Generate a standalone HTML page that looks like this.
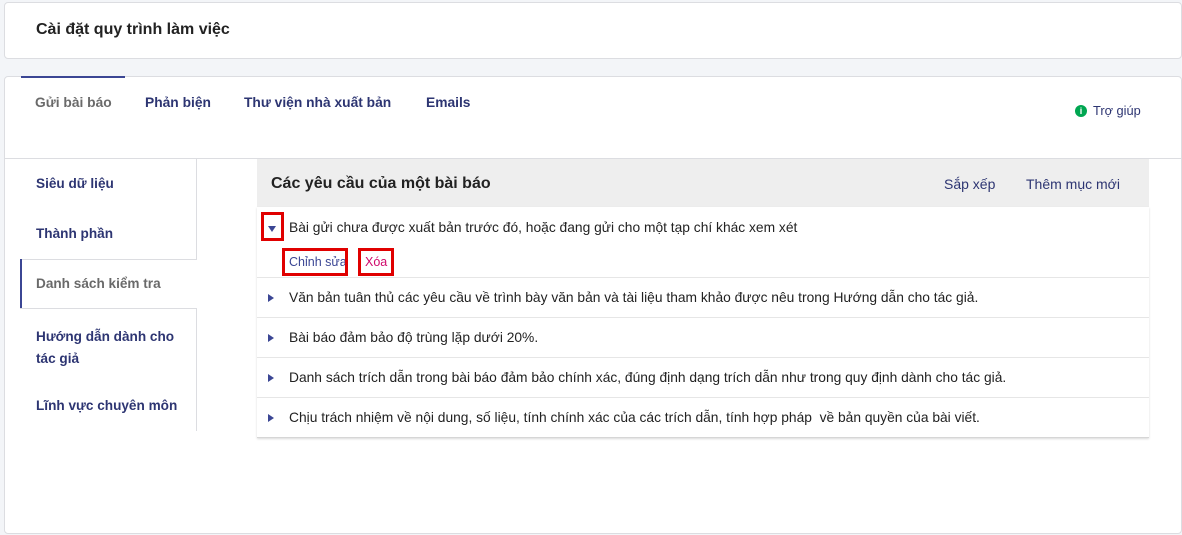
<!DOCTYPE html>
<html><head><meta charset="utf-8"><style>
*{box-sizing:border-box;margin:0;padding:0}
body{width:1182px;height:535px;background:#f3f5f8;font-family:"Liberation Sans","DejaVu Sans",sans-serif;position:relative;overflow:hidden;color:#222}
.a{position:absolute;white-space:nowrap}
.card{position:absolute;background:#fff;border:1px solid #dcdde1;border-radius:4px}
.nav{font-weight:bold;font-size:13.6px;color:#2d3572}
.row{position:absolute;left:257px;width:892px;border-bottom:1px solid #e6e6e6;font-size:13.8px;color:#222}
.tri{position:absolute;width:0;height:0;border-top:4px solid transparent;border-bottom:4px solid transparent;border-left:6px solid #3b4694}
.red{position:absolute;border:3px solid #e00000}
</style></head><body>
<div class="card" style="left:4px;top:2px;width:1178px;height:57px"></div>
<div class="a" style="left:36px;top:21px;font-size:16px;font-weight:bold;color:#222">Cài đặt quy trình làm việc</div>

<div class="card" style="left:4px;top:76px;width:1178px;height:458px"></div>
<div class="a" style="left:21px;top:76px;width:104px;height:2px;background:#3b4694"></div>
<div class="a" style="left:35px;top:95px;font-size:13.8px;font-weight:bold;color:#6a6a6a">Gửi bài báo</div>
<div class="a" style="left:145px;top:95px;font-size:13.8px;font-weight:bold;color:#2d3572">Phản biện</div>
<div class="a" style="left:244px;top:95px;font-size:13.8px;font-weight:bold;color:#2d3572">Thư viện nhà xuất bản</div>
<div class="a" style="left:426px;top:95px;font-size:13.8px;font-weight:bold;color:#2d3572">Emails</div>
<div class="a" style="left:1075px;top:105px;width:12px;height:12px;border-radius:50%;background:#00a651;color:#fff;font-size:9px;font-weight:bold;text-align:center;line-height:12px">i</div>
<div class="a" style="left:1093px;top:103px;font-size:12.8px;color:#2d3572">Trợ giúp</div>

<div class="a" style="left:5px;top:158px;width:1176px;height:1px;background:#dcdde1"></div>
<div class="a" style="left:196px;top:158px;width:1px;height:101px;background:#dcdde1"></div>
<div class="a" style="left:20px;top:259px;width:177px;height:1px;background:#dcdde1"></div>
<div class="a" style="left:20px;top:259px;width:2px;height:50px;background:#3b4694"></div>
<div class="a" style="left:20px;top:308px;width:177px;height:1px;background:#dcdde1"></div>
<div class="a" style="left:196px;top:308px;width:1px;height:123px;background:#dcdde1"></div>
<div class="a nav" style="left:36px;top:176px">Siêu dữ liệu</div>
<div class="a nav" style="left:36px;top:226px">Thành phần</div>
<div class="a nav" style="left:36px;top:276px;color:#6a6a6a">Danh sách kiểm tra</div>
<div class="a nav" style="left:36px;top:326px;line-height:22px;white-space:normal;width:150px">Hướng dẫn dành cho tác giả</div>
<div class="a nav" style="left:36px;top:398px">Lĩnh vực chuyên môn</div>

<div class="a" style="left:257px;top:159px;width:892px;height:48px;background:#eeeeee"></div>
<div class="a" style="left:271px;top:175px;font-size:16px;font-weight:bold;color:#222">Các yêu cầu của một bài báo</div>
<div class="a" style="left:944px;top:176px;font-size:14px;color:#2d3572">Sắp xếp</div>
<div class="a" style="left:1026px;top:176px;font-size:14px;color:#2d3572">Thêm mục mới</div>
<div class="a" style="left:257px;top:207px;width:892px;height:231px;box-shadow:0 1px 2px rgba(0,0,0,.15)"></div>

<div class="row" style="top:207px;height:71px">
 <div class="a" style="left:11px;top:19px;width:0;height:0;border-left:4px solid transparent;border-right:4px solid transparent;border-top:6px solid #3b4694"></div>
 <div class="a" style="left:32px;top:13px">Bài gửi chưa được xuất bản trước đó, hoặc đang gửi cho một tạp chí khác xem xét</div>
 <div class="a" style="left:32px;top:48px;font-size:12.5px;color:#3b4694">Chỉnh sửa</div>
 <div class="a" style="left:108px;top:48px;font-size:12.5px;color:#d00a6c">Xóa</div>
</div>
<div class="row" style="top:278px;height:40px"><div class="tri" style="left:11px;top:16px"></div><div class="a" style="left:32px;top:12px">Văn bản tuân thủ các yêu cầu về trình bày văn bản và tài liệu tham khảo được nêu trong Hướng dẫn cho tác giả.</div></div>
<div class="row" style="top:318px;height:40px"><div class="tri" style="left:11px;top:16px"></div><div class="a" style="left:32px;top:12px">Bài báo đảm bảo độ trùng lặp dưới 20%.</div></div>
<div class="row" style="top:358px;height:40px"><div class="tri" style="left:11px;top:16px"></div><div class="a" style="left:32px;top:12px">Danh sách trích dẫn trong bài báo đảm bảo chính xác, đúng định dạng trích dẫn như trong quy định dành cho tác giả.</div></div>
<div class="row" style="top:398px;height:40px;border-bottom:1px solid #d6d6d6"><div class="tri" style="left:11px;top:16px"></div><div class="a" style="left:32px;top:12px">Chịu trách nhiệm về nội dung, số liệu, tính chính xác của các trích dẫn, tính hợp pháp&nbsp; về bản quyền của bài viết.</div></div>

<div class="red" style="left:261px;top:212px;width:23px;height:29px"></div>
<div class="red" style="left:282px;top:248px;width:66px;height:28px"></div>
<div class="red" style="left:358px;top:248px;width:36px;height:28px"></div>
</body></html>
